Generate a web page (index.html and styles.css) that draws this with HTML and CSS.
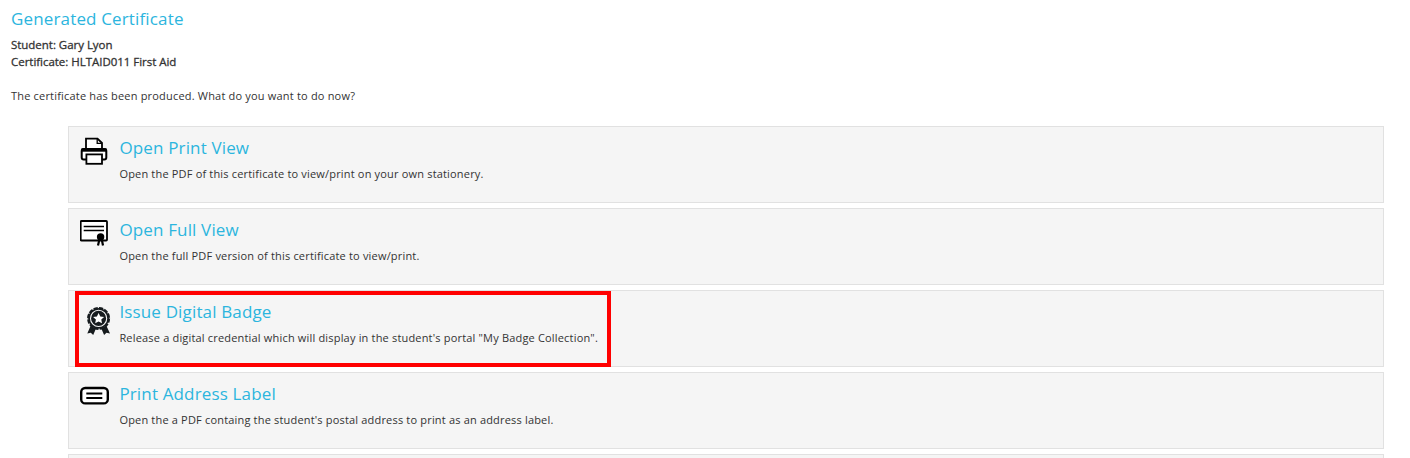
FILE: index.html
```html
<!DOCTYPE html>
<html lang="en">
<head>
<meta charset="utf-8">
<title>Generated Certificate</title>
<link rel="stylesheet" href="styles.css">
</head>
<body>
<main class="page">
  <h1 class="title">Generated Certificate</h1>
  <div class="details">
    <div>Student: Gary Lyon</div>
    <div>Certificate: HLTAID011 First Aid</div>
  </div>
  <p class="intro">The certificate has been produced. What do you want to do now?</p>
  <div class="options">
    <section class="card">
      <svg class="icon" viewBox="0 0 32 36" fill="none" stroke="#000" stroke-width="2">
        <path d="M6 13V2.7H17.5L22 7V13" fill="#fff" stroke-width="1.8"/>
        <path d="M17.2 3V7.3H22" stroke-width="1.3"/>
        <rect x="1.7" y="13" width="24.6" height="10.6" rx="2" fill="#fff"/>
        <path d="M1.5 14H26.5" stroke-width="3.4"/>
        <rect x="6.4" y="18.4" width="15.6" height="9.4" fill="#fff" stroke-width="1.8"/>
      </svg>
      <div class="text">
        <h2 class="heading">Open Print View</h2>
        <p class="desc">Open the PDF of this certificate to view/print on your own stationery.</p>
      </div>
    </section>
    <section class="card">
      <svg class="icon" viewBox="0 0 32 36" fill="none" stroke="#000">
        <rect x=".7" y="3" width="26.3" height="19.5" rx=".8" fill="#fff" stroke-width="1.8"/>
        <path d="M3.7 8.5H24M3.7 12.5H24" stroke-width="1.3"/>
        <circle cx="20.6" cy="18.9" r="3.7" fill="#000" stroke="none"/>
        <path d="M19.4 21.5L18 27.5M21.8 21.5L23 27.5" stroke-width="2.2"/>
      </svg>
      <div class="text">
        <h2 class="heading">Open Full View</h2>
        <p class="desc">Open the full PDF version of this certificate to view/print.</p>
      </div>
    </section>
    <section class="card">
      <svg class="icon" viewBox="0 0 32 36" fill="none" stroke="#161b1e">
        <path d="M10.5 26L7.3 33.5 10.8 32.8 13.2 35 16.2 28ZM26.5 26L30 33.5 26.5 32.8 24.1 35 21.1 28Z" fill="#161b1e" stroke="none"/>
        <circle cx="18.6" cy="18.4" r="10.4" fill="#161b1e" stroke-width="2.2" stroke-dasharray="4.25 1.2"/>
        <circle cx="18.6" cy="18.4" r="8.1" stroke="#f4f4f4" stroke-width="1.1"/>
        <path d="M18.6 12.9L20.3 16.4 24.1 16.9 21.3 19.5 22 23.3 18.6 21.4 15.2 23.3 15.9 19.5 13.1 16.9 16.9 16.4Z" fill="#fff" stroke="none"/>
      </svg>
      <div class="text">
        <h2 class="heading">Issue Digital Badge</h2>
        <p class="desc">Release a digital credential which will display in the student's portal "My Badge Collection".</p>
      </div>
      <div class="highlight"></div>
    </section>
    <section class="card">
      <svg class="icon" viewBox="0 0 32 36" fill="none" stroke="#000">
        <rect x="1.2" y="6" width="26.6" height="15.4" rx="4" fill="#fff" stroke-width="2.4"/>
        <path d="M6.3 11.5H22.3M6.3 16H22.3" stroke-width="2.1"/>
      </svg>
      <div class="text">
        <h2 class="heading">Print Address Label</h2>
        <p class="desc">Open the a PDF containg the student's postal address to print as an address label.</p>
      </div>
    </section>
    <section class="card"></section>
  </div>
</main>
</body>
</html>
```
FILE: styles.css
```css
* { box-sizing: border-box; }
body {
  margin: 0;
  background: #fff;
  color: #333;
  font-family: "Open Sans", sans-serif;
  font-size: 11px;
}
h1, h2, p { margin: 0; }
.page {
  height: 458px;
  overflow: hidden;
  padding: 7px 26px 0 11px;
}
.title, .heading {
  color: #2cb5de;
  font-size: 17px;
  font-weight: 400;
  line-height: 24px;
  letter-spacing: .15px;
  white-space: nowrap;
}
.details {
  margin-top: 5px;
  font-size: 11.5px;
  line-height: 17px;
  letter-spacing: -.03px;
  -webkit-text-stroke: .3px #333;
}
.intro {
  margin-top: 17px;
  line-height: 17px;
  letter-spacing: .19px;
}
.options {
  display: flex;
  flex-direction: column;
  gap: 5px;
  margin: 22px 0 0 57px;
}
.card {
  position: relative;
  display: flex;
  flex: none;
  gap: 7.4px;
  height: 77px;
  padding: 9px 11px;
  border: 1px solid #e1e1e1;
  background: #f5f5f5;
}
.icon {
  flex: none;
  width: 32px;
  height: 36px;
}
.desc {
  margin-top: 5px;
  line-height: 17px;
  letter-spacing: .18px;
  white-space: nowrap;
}
.highlight {
  position: absolute;
  top: 0;
  left: 6px;
  width: 536px;
  height: 76px;
  border: 4px solid #f00;
}
```
